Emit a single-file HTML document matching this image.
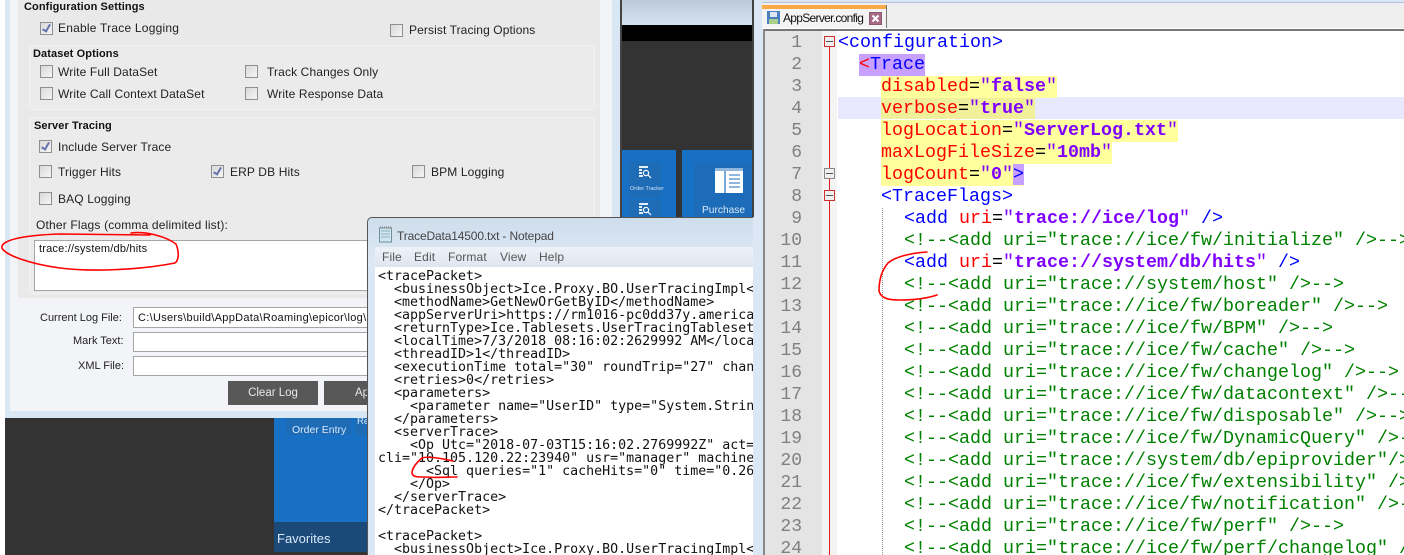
<!DOCTYPE html>
<html>
<head>
<meta charset="utf-8">
<style>
html,body{margin:0;padding:0;background:#fff}
#p{position:relative;width:1404px;height:555px;overflow:hidden;background:#fff;font-family:"Liberation Sans",sans-serif}
#p div,#p span.a{position:absolute}
.t{font-size:12px;color:#222;white-space:nowrap;line-height:14px;letter-spacing:.13px}
.b{font-weight:bold;color:#111;font-size:11px;letter-spacing:.1px}
.c{width:11px;height:11px;border:1px solid #8e8f8f;background:linear-gradient(135deg,#d8d8d8,#f6f6f6)}
.c.k::after{content:"";position:absolute;left:3px;top:0;width:3px;height:7px;border:solid #6474ae;border-width:0 2px 2px 0;transform:rotate(30deg)}
.g{background:#ebebeb;border:1px solid #f3f3f3;border-radius:3px;box-sizing:border-box}
.i{background:#fff;border:1px solid #a6a6a6;box-sizing:border-box}
.btn{background:#585858;color:#e8e8e8;font-size:11.5px;text-align:center;line-height:24px;height:24px}
.n{font:13.3px/13px "DejaVu Sans Mono",monospace;color:#111;white-space:pre;left:378px}
.r{font:18.33px/22px "Liberation Mono",monospace;white-space:pre;height:22px}
.ln{font:18px/22px "Liberation Mono",monospace;color:#808080;text-align:right;left:765px;width:37px;height:22px}
.u{color:#00f}.e{color:#f00}.v{color:#8000ff;font-weight:bold}.q{color:#8000ff}.m{color:#008000}
.y{background:#ffff9e}
.f{width:9px;height:9px;border:1px solid #d03030;background:#efefef;left:824px}
.f::after{content:"";position:absolute;left:1px;top:4px;width:7px;height:1px;background:#555}
</style>
</head>
<body>
<div id="p">
<!-- left panel -->
<div style="left:5px;top:0;width:616px;height:418px;background:#d9e6f4"></div>
<div style="left:10px;top:0;width:602px;height:411px;background:#f3f4f8"></div>
<div class="g" style="left:17px;top:-4px;width:584px;height:303px;background:#e9e9e9"></div>
<div class="t b" style="left:24px;top:0;">Configuration Settings</div>
<div class="c k" style="left:40px;top:22px"></div><div class="t" style="left:58px;top:21px;letter-spacing:.22px">Enable Trace Logging</div>
<div class="c" style="left:390px;top:24px"></div><div class="t" style="left:409px;top:23px;letter-spacing:.1px">Persist Tracing Options</div>
<div class="g" style="left:29px;top:45px;width:566px;height:65px"></div>
<div class="t b" style="left:33px;top:47px">Dataset Options</div>
<div class="c" style="left:40px;top:65px"></div><div class="t" style="left:58px;top:65px">Write Full DataSet</div>
<div class="c" style="left:245px;top:65px"></div><div class="t" style="left:267px;top:65px">Track Changes Only</div>
<div class="c" style="left:40px;top:87px"></div><div class="t" style="left:58px;top:87px">Write Call Context DataSet</div>
<div class="c" style="left:245px;top:87px"></div><div class="t" style="left:267px;top:87px">Write Response Data</div>
<div class="g" style="left:29px;top:117px;width:566px;height:177px"></div>
<div class="t b" style="left:34px;top:119px">Server Tracing</div>
<div class="c k" style="left:39px;top:140px"></div><div class="t" style="left:58px;top:140px">Include Server Trace</div>
<div class="c" style="left:39px;top:165px"></div><div class="t" style="left:58px;top:165px">Trigger Hits</div>
<div class="c k" style="left:211px;top:165px"></div><div class="t" style="left:230px;top:165px">ERP DB Hits</div>
<div class="c" style="left:412px;top:165px"></div><div class="t" style="left:431px;top:165px">BPM Logging</div>
<div class="c" style="left:39px;top:192px"></div><div class="t" style="left:58px;top:192px">BAQ Logging</div>
<div class="t" style="left:36px;top:218px;letter-spacing:.17px">Other Flags (comma delimited list):</div>
<div class="i" style="left:34px;top:240px;width:350px;height:51px"></div>
<div class="t" style="left:39px;top:242px;font-size:11px;color:#111;letter-spacing:.2px">trace://system/db/hits</div>
<div class="t" style="left:40px;top:311px;font-size:11px;letter-spacing:0">Current Log File:</div>
<div class="t" style="left:73px;top:334px;font-size:11px;letter-spacing:0">Mark Text:</div>
<div class="t" style="left:78px;top:359px;font-size:11px;letter-spacing:0">XML File:</div>
<div class="i" style="left:133px;top:307px;width:250px;height:21px"></div>
<div class="t" style="left:138px;top:311px;font-size:11px;color:#111;letter-spacing:.3px">C:\Users\build\AppData\Roaming\epicor\log\</div>
<div class="i" style="left:133px;top:332px;width:250px;height:20px"></div>
<div class="i" style="left:133px;top:356px;width:250px;height:20px"></div>
<div class="btn" style="left:228px;top:381px;width:90px">Clear Log</div>
<div class="btn" style="left:324px;top:381px;width:60px;text-align:left;text-indent:31px">Ap</div>
<!-- dark app behind -->
<div style="left:5px;top:418px;width:364px;height:137px;background:#333"></div>
<div style="left:274px;top:418px;width:94px;height:104px;background:#1870c4"></div>
<div style="left:286px;top:418px;width:65px;height:17px;background:#1f6cb6"></div>
<div style="left:355px;top:418px;width:13px;height:17px;background:#1f6cb6"></div>
<div class="t" style="left:292px;top:423px;font-size:10.5px;color:#d8e8f8;letter-spacing:0">Order Entry</div>
<div class="t" style="left:357px;top:415px;font-size:9.5px;color:#d8e8f8;letter-spacing:0">Re</div>
<div style="left:274px;top:522px;width:94px;height:30px;background:#1b4a78"></div>
<div class="t" style="left:277px;top:532px;font-size:13px;color:#d8e8f8;letter-spacing:0">Favorites</div>
<!-- top mid app -->
<div style="left:621px;top:0;width:132px;height:25px;background:linear-gradient(#bccbd9,#d5e2ef)"></div>
<div style="left:621px;top:25px;width:132px;height:16px;background:#000"></div>
<div style="left:621px;top:41px;width:132px;height:176px;background:#333"></div>
<div style="left:622px;top:150px;width:54px;height:67px;background:#1870c4"></div>
<div style="left:682px;top:150px;width:71px;height:67px;background:#1870c4"></div>
<div style="left:629px;top:162px;width:32px;height:36px;background:#1f6cb6"></div>
<div style="left:629px;top:200px;width:32px;height:17px;background:#1f6cb6"></div>
<div style="left:694px;top:163px;width:59px;height:54px;background:#1c6cb9"></div>
<div class="t" style="left:630px;top:183px;font-size:5.5px;line-height:12px;color:#cfe2f6;letter-spacing:0">Order Tracker</div>
<div class="t" style="left:702px;top:204px;font-size:10.2px;color:#d8e8f8;letter-spacing:0">Purchase</div>
<svg style="position:absolute;left:638px;top:165px" width="14" height="14" viewBox="0 0 14 14"><path d="M1 1h9v2H1zM1 4h3v2H1zM1 7h3v2H1zM1 10h4v2H1z" fill="#e4eef8"/><circle cx="8" cy="8" r="2.6" fill="none" stroke="#fff" stroke-width="1.2"/><path d="M10 10l3 3" stroke="#fff" stroke-width="1.2"/></svg>
<svg style="position:absolute;left:638px;top:202px" width="14" height="14" viewBox="0 0 14 14"><path d="M1 1h9v2H1zM1 4h3v2H1zM1 7h3v2H1zM1 10h4v2H1z" fill="#e4eef8"/><circle cx="8" cy="8" r="2.6" fill="none" stroke="#fff" stroke-width="1.2"/><path d="M10 10l3 3" stroke="#fff" stroke-width="1.2"/></svg>
<svg style="position:absolute;left:715px;top:168px" width="28" height="25" viewBox="0 0 28 25"><rect width="28" height="25" fill="#fff"/><rect y="0" width="28" height="3" fill="#8fb6de"/><rect x="9" y="3" width="2" height="22" fill="#7aa8d8"/><path d="M14 6h11v2H14zM14 10h11v2H14zM14 14h11v2H14zM14 18h11v2H14z" fill="#8fb6de"/></svg>
<div style="left:753px;top:0;width:2px;height:555px;background:#dbe7f4"></div>
<div style="left:620px;top:0;width:1.5px;height:217px;background:#444"></div>
<div style="left:752px;top:0;width:1.5px;height:217px;background:#444"></div>
<!-- notepad -->
<div style="left:367px;top:217px;width:386px;height:338px;background:linear-gradient(#cfdeec,#dbe7f4 40px);border:1px solid #555;border-right:0;border-bottom:0;border-radius:5px 0 0 0;box-sizing:border-box"></div>
<svg style="position:absolute;left:378px;top:226px" width="15" height="17" viewBox="0 0 15 17"><rect x="1.5" y="2" width="12" height="14" fill="#cfe6ee" stroke="#6f8ea0"/><path d="M3 5h9M3 8h9M3 11h9" stroke="#8fb0c0"/><path d="M2 1.5h11" stroke="#888" stroke-dasharray="1 1" stroke-width="2"/></svg>
<div class="t" style="left:397px;top:229px;color:#444;font-size:12px;letter-spacing:-.15px">TraceData14500.txt - Notepad</div>
<div style="left:375px;top:247px;width:378px;height:20px;background:linear-gradient(#eef2f8,#dfe5f0)"></div>
<div class="t" style="left:382px;top:250px;color:#555">File</div>
<div class="t" style="left:414px;top:250px;color:#555">Edit</div>
<div class="t" style="left:448px;top:250px;color:#555">Format</div>
<div class="t" style="left:500px;top:250px;color:#555">View</div>
<div class="t" style="left:539px;top:250px;color:#555">Help</div>
<div style="left:375px;top:267px;width:378px;height:288px;background:#fff;overflow:hidden">
<div class="n" style="left:3px;top:3px">&lt;tracePacket&gt;
  &lt;businessObject&gt;Ice.Proxy.BO.UserTracingImpl&lt;/businessObject&gt;
  &lt;methodName&gt;GetNewOrGetByID&lt;/methodName&gt;
  &lt;appServerUri&gt;https://rm1016-pc0dd37y.americas.epicor.net&lt;/appServerUri&gt;
  &lt;returnType&gt;Ice.Tablesets.UserTracingTableset&lt;/returnType&gt;
  &lt;localTime&gt;7/3/2018 08:16:02:2629992 AM&lt;/localTime&gt;
  &lt;threadID&gt;1&lt;/threadID&gt;
  &lt;executionTime total="30" roundTrip="27" channel="0"/&gt;
  &lt;retries&gt;0&lt;/retries&gt;
  &lt;parameters&gt;
    &lt;parameter name="UserID" type="System.String"/&gt;
  &lt;/parameters&gt;
  &lt;serverTrace&gt;
    &lt;Op Utc="2018-07-03T15:16:02.2769992Z" act=""
cli="10.105.120.22:23940" usr="manager" machine="RM1016"
      &lt;Sql queries="1" cacheHits="0" time="0.26"/&gt;
    &lt;/Op&gt;
  &lt;/serverTrace&gt;
&lt;/tracePacket&gt;

&lt;tracePacket&gt;
  &lt;businessObject&gt;Ice.Proxy.BO.UserTracingImpl&lt;/businessObject&gt;</div>
</div>
<!-- editor -->
<div style="left:755px;top:0;width:649px;height:555px;background:#dbe7f4"></div>
<div style="left:762px;top:2px;width:642px;height:1px;background:#b8c0dc"></div>
<div style="left:762px;top:3px;width:642px;height:25px;background:#efefef"></div>
<div style="left:762px;top:5px;width:124px;height:24px;background:#f4f4f4;border-right:1px solid #777"></div>
<div style="left:762px;top:5px;width:124px;height:4px;background:#fbaa45"></div>
<svg style="position:absolute;left:767px;top:11px" width="13" height="13" viewBox="0 0 13 13"><rect width="13" height="13" fill="#4a7fc0"/><rect x="3" y="1" width="7" height="5" fill="#dfe8f2"/><rect x="2" y="8" width="9" height="5" fill="#a8d08d"/></svg>
<div class="t" style="left:783px;top:11px;font-size:12px;color:#111;letter-spacing:-.7px">AppServer.config</div>
<div style="left:869px;top:12px;width:11px;height:11px;background:#a76a85;border:1px solid #8a5a70"></div>
<svg style="position:absolute;left:870px;top:13px" width="11" height="11" viewBox="0 0 11 11"><path d="M2.5 2.5l6 6M8.5 2.5l-6 6" stroke="#fff" stroke-width="2"/></svg>
<div style="left:763px;top:28px;width:641px;height:527px;background:#fff"></div>
<div style="left:763px;top:29px;width:641px;height:2px;background:#777"></div>
<div style="left:763px;top:29px;width:2px;height:526px;background:#888"></div>
<div style="left:765px;top:31px;width:57px;height:524px;background:#e4e4e4"></div>
<div style="left:822px;top:31px;width:15px;height:524px;background:#f4f4f4"></div>
<div style="left:829px;top:42px;width:1px;height:513px;background:#e02020"></div>
<div class="f" style="top:36px"></div>
<div class="f" style="top:168px;border-color:#888"></div>
<div class="f" style="top:190px"></div>
<div style="left:882px;top:208px;width:0;height:347px;border-left:1px dotted #999"></div>
<div style="left:838px;top:97px;width:566px;height:22px;background:#e8e8ff"></div>
<div class="ln" style="top:32px">1</div><div class="ln" style="top:54px">2</div><div class="ln" style="top:76px">3</div><div class="ln" style="top:98px">4</div><div class="ln" style="top:120px">5</div><div class="ln" style="top:142px">6</div><div class="ln" style="top:164px">7</div><div class="ln" style="top:186px">8</div><div class="ln" style="top:208px">9</div><div class="ln" style="top:230px">10</div><div class="ln" style="top:252px">11</div><div class="ln" style="top:274px">12</div><div class="ln" style="top:296px">13</div><div class="ln" style="top:318px">14</div><div class="ln" style="top:340px">15</div><div class="ln" style="top:362px">16</div><div class="ln" style="top:384px">17</div><div class="ln" style="top:406px">18</div><div class="ln" style="top:428px">19</div><div class="ln" style="top:450px">20</div><div class="ln" style="top:472px">21</div><div class="ln" style="top:494px">22</div><div class="ln" style="top:516px">23</div><div class="ln" style="top:538px">24</div>
<div class="r" style="left:838px;top:32px"><span class="u">&lt;configuration&gt;</span></div>
<div class="r" style="left:859px;top:54px;background:#c8a0ff"><span class="e">&lt;</span><span class="u">Trace</span></div>
<div class="r y" style="left:881px;top:76px"><span class="e">disabled</span>=<span class="q">"</span><span class="v">false</span><span class="q">"</span></div>
<div class="r" style="left:881px;top:98px;background:#f0f09a;height:21px"><span class="e">verbose</span>=<span class="q">"</span><span class="v">true</span><span class="q">"</span></div>
<div class="r y" style="left:881px;top:120px"><span class="e">logLocation</span>=<span class="q">"</span><span class="v">ServerLog.txt</span><span class="q">"</span></div>
<div class="r y" style="left:881px;top:142px"><span class="e">maxLogFileSize</span>=<span class="q">"</span><span class="v">10mb</span><span class="q">"</span></div>
<div class="r y" style="left:881px;top:164px"><span class="e">logCount</span>=<span class="q">"</span><span class="v">0</span><span class="q">"</span><span class="u" style="background:#c8a0ff">&gt;</span></div>
<div class="r" style="left:881px;top:186px"><span class="u">&lt;TraceFlags&gt;</span></div>
<div class="r" style="left:904px;top:208px"><span class="u">&lt;add </span><span class="e">uri</span>=<span class="q">"</span><span class="v">trace://ice/log</span><span class="q">"</span><span class="u"> /&gt;</span></div>
<div class="r m" style="left:904px;top:230px">&lt;!--&lt;add uri="trace://ice/fw/initialize" /&gt;--&gt;</div>
<div class="r" style="left:904px;top:252px"><span class="u">&lt;add </span><span class="e">uri</span>=<span class="q">"</span><span class="v">trace://system/db/hits</span><span class="q">"</span><span class="u"> /&gt;</span></div>
<div class="r m" style="left:904px;top:274px">&lt;!--&lt;add uri="trace://system/host" /&gt;--&gt;</div>
<div class="r m" style="left:904px;top:296px">&lt;!--&lt;add uri="trace://ice/fw/boreader" /&gt;--&gt;</div>
<div class="r m" style="left:904px;top:318px">&lt;!--&lt;add uri="trace://ice/fw/BPM" /&gt;--&gt;</div>
<div class="r m" style="left:904px;top:340px">&lt;!--&lt;add uri="trace://ice/fw/cache" /&gt;--&gt;</div>
<div class="r m" style="left:904px;top:362px">&lt;!--&lt;add uri="trace://ice/fw/changelog" /&gt;--&gt;</div>
<div class="r m" style="left:904px;top:384px">&lt;!--&lt;add uri="trace://ice/fw/datacontext" /&gt;--&gt;</div>
<div class="r m" style="left:904px;top:406px">&lt;!--&lt;add uri="trace://ice/fw/disposable" /&gt;--&gt;</div>
<div class="r m" style="left:904px;top:428px">&lt;!--&lt;add uri="trace://ice/fw/DynamicQuery" /&gt;--&gt;</div>
<div class="r m" style="left:904px;top:450px">&lt;!--&lt;add uri="trace://system/db/epiprovider"/&gt;--&gt;</div>
<div class="r m" style="left:904px;top:472px">&lt;!--&lt;add uri="trace://ice/fw/extensibility" /&gt;--&gt;</div>
<div class="r m" style="left:904px;top:494px">&lt;!--&lt;add uri="trace://ice/fw/notification" /&gt;--&gt;</div>
<div class="r m" style="left:904px;top:516px">&lt;!--&lt;add uri="trace://ice/fw/perf" /&gt;--&gt;</div>
<div class="r m" style="left:904px;top:538px">&lt;!--&lt;add uri="trace://ice/fw/perf/changelog" /&gt;--&gt;</div>
<!-- red annotations -->
<svg style="position:absolute;left:0;top:0" width="1404" height="555" fill="none" stroke="#f00" stroke-width="1.6" stroke-linecap="round">
<path d="M131 233C145 231 165 236 176 244C180 254 178 261 175 263C140 270 90 272 60 268C30 264 5 255 2 248C0 240 25 235 60 234L150 235"/>
<path d="M453 461C440 458 428 456 422 458C417 462 412 468 412 473C413 477 416 477 425 477C435 478 448 477 457 477"/>
<path d="M927 252C910 253 895 257 888 263C882 270 879 280 879 291C881 298 887 300 900 300C915 300 928 298 937 295"/>
</svg>
</div>
</body>
</html>
